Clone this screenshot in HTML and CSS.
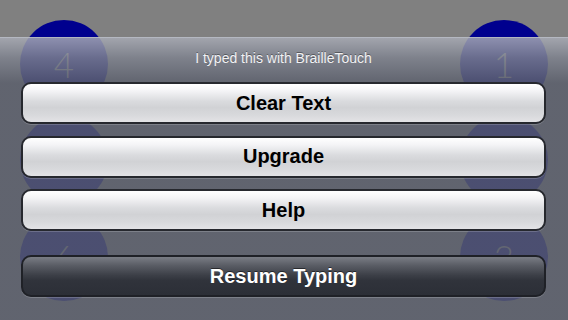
FILE: index.html
```html
<!DOCTYPE html>
<html>
<head>
<meta charset="utf-8">
<link rel="stylesheet" href="styles.css">
</head>
<body>
<div class="screen">
  <div class="key key-4"><span>4</span></div>
  <div class="key key-5"><span>5</span></div>
  <div class="key key-6"><span>6</span></div>
  <div class="key key-1"><span>1</span></div>
  <div class="key key-2"><span>2</span></div>
  <div class="key key-3"><span>3</span></div>
  <div class="sheet">
    <div class="sheet-title">I typed this with BrailleTouch</div>
    <div class="sheet-buttons">
      <button class="btn">Clear Text</button>
      <button class="btn">Upgrade</button>
      <button class="btn">Help</button>
      <button class="btn btn-dark">Resume Typing</button>
    </div>
  </div>
</div>
</body>
</html>
```
FILE: styles.css
```css
html, body {
  margin: 0;
  padding: 0;
}
body {
  width: 568px;
  height: 320px;
  overflow: hidden;
  background: #808080;
  font-family: "Liberation Sans", Arial, sans-serif;
}
.screen {
  position: relative;
  width: 568px;
  height: 320px;
}
.key {
  position: absolute;
  width: 88px;
  height: 88px;
  border-radius: 50%;
  background: #00008e;
  display: flex;
  align-items: center;
  justify-content: center;
}
.key span {
  font-family: "Lato", "Liberation Sans", sans-serif;
  font-weight: 300;
  font-size: 35px;
  color: #959595;
}
.key-4 { left: 20px; top: 20px; }
.key-5 { left: 20px; top: 116px; }
.key-6 { left: 20px; top: 213px; }
.key-1 { left: 460px; top: 20px; }
.key-2 { left: 460px; top: 116px; }
.key-3 { left: 460px; top: 213px; }

.sheet {
  position: absolute;
  left: 0;
  right: 0;
  top: 37px;
  bottom: 0;
  border-top: 1px solid rgba(190, 193, 202, 0.9);
  background: linear-gradient(rgba(168, 171, 181, 0.84) 0px, rgba(125, 129, 141, 0.84) 20px, rgba(90, 94, 107, 0.84) 45px, rgba(90, 94, 107, 0.84) 100%);
  padding: 12px 22px 0 21px;
  box-sizing: border-box;
}
.sheet-title {
  height: 16px;
  line-height: 16px;
  text-align: center;
  color: #f2f2f4;
  font-size: 14px;
  text-shadow: 0 -1px 0 rgba(0, 0, 0, 0.35);
  margin-bottom: 16px;
}
.sheet-buttons {
  display: flex;
  flex-direction: column;
  gap: 11.5px;
}
.btn {
  height: 42px;
  width: 100%;
  border: 2px solid #26282e;
  border-radius: 10px;
  background: linear-gradient(#ffffff 0%, #f4f4f6 18%, #dadbde 45%, #d1d2d5 62%, #d8d9dc 82%, #e3e3e6 100%);
  box-shadow: 0 1px 0 rgba(255, 255, 255, 0.18);
  font-family: "Liberation Sans", Arial, sans-serif;
  font-weight: bold;
  font-size: 20px;
  color: #000;
  padding: 0;
  text-align: center;
}
.btn-dark {
  margin-top: 12.5px;
  border-color: #1f2127;
  background: linear-gradient(#7a7d85 0%, #5a5d65 22%, #3c3f47 48%, #30333b 62%, #2c2f37 100%);
  color: #fff;
  text-shadow: 0 -1px 0 rgba(0, 0, 0, 0.5);
}
```
